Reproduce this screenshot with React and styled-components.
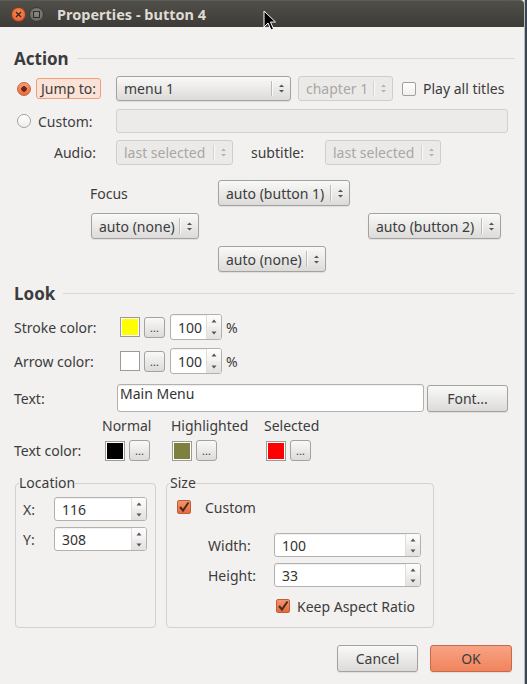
import React from 'react';
import styled, { createGlobalStyle } from 'styled-components';

const Global = createGlobalStyle`
  html, body { margin: 0; padding: 0; background: #3a4654; }
  body {
    font-family: "Noto Sans", "DejaVu Sans", sans-serif;
    font-size: 14px;
    color: #3c3c3c;
  }
  * { box-sizing: border-box; }
`;

const Window = styled.div`
  position: relative;
  width: 525px;
  height: 684px;
  background: #f2f1f0;
  border-right: 1px solid #bdbbb8;
  display: flex;
  flex-direction: column;
  overflow: hidden;
`;

const TitleBar = styled.div`
  flex: none;
  height: 27px;
  display: flex;
  align-items: center;
  padding-left: 11px;
  background: linear-gradient(#504f4a, #3c3b37);
  border-top-right-radius: 4px;
  border-top: 1px solid #5c5b56;
`;

const WinButton = styled.span`
  width: 15px;
  height: 15px;
  border-radius: 50%;
  margin-right: ${p => p.$mr}px;
  display: flex;
  align-items: center;
  justify-content: center;
  border: 1px solid ${p => (p.$close ? '#8a3a1c' : '#3a3935')};
  background: ${p =>
    p.$close
      ? 'radial-gradient(circle at 50% 40%, #f7905f, #e0531f)'
      : 'radial-gradient(circle at 50% 40%, #8d8b84, #5e5c56)'};
`;

const Title = styled.span`
  font-weight: bold;
  font-size: 14.5px;
  color: #dfdbd2;
  white-space: nowrap;
`;

const Body = styled.div`
  flex: 1;
  display: flex;
  flex-direction: column;
  padding-left: 14px;
`;

const Heading = styled.div`
  height: 20px;
  margin-top: ${p => p.$mt}px;
  display: flex;
  align-items: center;
  gap: 8px;
  font-weight: bold;
  font-size: 17px;
  padding-right: 9px;
  &::after {
    content: '';
    flex: 1;
    height: 1px;
    background: #d9d7d4;
  }
`;

const Row = styled.div`
  display: flex;
  align-items: center;
  height: ${p => p.$h || 25}px;
  margin-top: ${p => p.$mt || 0}px;
  white-space: nowrap;
`;

const LabelCell = styled.div`
  flex: none;
  width: ${p => p.$w}px;
  padding-left: ${p => p.$pl || 0}px;
  display: flex;
  align-items: center;
`;

const Gap = styled.span`
  flex: none;
  width: ${p => p.$w}px;
`;

const Radio = styled.span`
  flex: none;
  width: 14px;
  height: 14px;
  margin-left: 3px;
  margin-right: ${p => p.$mr}px;
  border-radius: 50%;
  border: 1px solid ${p => (p.$on ? '#c4643d' : '#a6a4a0')};
  background: ${p =>
    p.$on
      ? 'radial-gradient(circle, #6a2a12 0 2.5px, transparent 3px), linear-gradient(#f79d77, #ea6a3c)'
      : 'linear-gradient(#ffffff, #efeeed)'};
`;

const FocusLabel = styled.span`
  height: 21px;
  padding: 0 4px;
  display: flex;
  align-items: center;
  background: #fbe2d7;
  border: 1px solid #f29c78;
  border-radius: 3px;
`;

const ComboBox = styled.div`
  flex: none;
  width: ${p => p.$w}px;
  height: ${p => p.$h || 25}px;
  display: flex;
  align-items: center;
  border-radius: 3px;
  border: 1px solid ${p => (p.$disabled ? '#d0cecb' : '#a4a29f')};
  background: ${p => (p.$disabled ? '#ebeae8' : 'linear-gradient(#f9f9f8, #dcdbd9)')};
  color: ${p => (p.$disabled ? '#a9a7a4' : '#3c3c3c')};
  box-shadow: ${p => (p.$disabled ? 'none' : '0 1px 1px rgba(0,0,0,0.08)')};
`;

const ComboText = styled.span`
  flex: 1;
  padding-left: 7px;
  overflow: hidden;
`;

const ComboSep = styled.span`
  width: 1px;
  align-self: stretch;
  margin: 4px 0;
  background: ${p => (p.$disabled ? '#d3d1ce' : '#bdbbb8')};
  box-shadow: 1px 0 0 rgba(255, 255, 255, 0.7);
`;

const ArrowBox = styled.span`
  width: 18px;
  display: flex;
  align-items: center;
  justify-content: center;
`;

const UpDown = ({ color = '#4c4c4c' }) => (
  <svg width="7" height="11" viewBox="0 0 7 11">
    <path d="M1 4 L3.5 1.5 L6 4 Z" fill={color} />
    <path d="M1 7 L3.5 9.5 L6 7 Z" fill={color} />
  </svg>
);

const Combo = ({ w, h, disabled, children }) => (
  <ComboBox $w={w} $h={h} $disabled={disabled}>
    <ComboText>{children}</ComboText>
    <ComboSep $disabled={disabled} />
    <ArrowBox>
      <UpDown color={disabled ? '#b5b3b0' : '#555'} />
    </ArrowBox>
  </ComboBox>
);

const Entry = styled.div`
  flex: none;
  width: ${p => p.$w}px;
  height: ${p => p.$h}px;
  border-radius: 3px;
  border: 1px solid ${p => (p.$disabled ? '#d2d0cd' : '#b3b1ae')};
  background: ${p => (p.$disabled ? '#ecebea' : '#ffffff')};
  box-shadow: ${p => (p.$disabled ? 'none' : 'inset 0 1px 1px rgba(0,0,0,0.07)')};
  padding: 0 2px;
  line-height: 18px;
  color: #333;
`;

const CheckBox = styled.span`
  flex: none;
  width: 14px;
  height: 14px;
  margin-left: ${p => p.$ml || 0}px;
  margin-right: ${p => p.$mr || 0}px;
  border-radius: 2px;
  display: flex;
  align-items: center;
  justify-content: center;
  border: 1px solid ${p => (p.$on ? '#bf5f3a' : '#a3a19e')};
  background: ${p => (p.$on ? 'linear-gradient(#f5946c, #e66a3c)' : 'linear-gradient(#ffffff, #f0efee)')};
`;

const Check = ({ on, ml, mr }) => (
  <CheckBox $on={on} $ml={ml} $mr={mr}>
    {on && (
      <svg width="12" height="12" viewBox="0 0 12 12">
        <path d="M2 6 L5 9.5 L10.5 1.5" fill="none" stroke="#4b2a1e" strokeWidth="2" />
      </svg>
    )}
  </CheckBox>
);

const SpinBox = styled.div`
  flex: none;
  width: ${p => p.$w}px;
  height: ${p => p.$h || 24}px;
  display: flex;
  border: 1px solid #b3b1ae;
  border-radius: 3px;
  background: #fff;
  overflow: hidden;
  box-shadow: inset 0 1px 1px rgba(0,0,0,0.06);
`;

const SpinText = styled.span`
  flex: 1;
  display: flex;
  align-items: center;
  padding-left: 7px;
  color: #333;
`;

const SpinButtons = styled.div`
  width: 15px;
  display: flex;
  flex-direction: column;
  border-left: 1px solid #e0dedc;
`;

const SpinHalf = styled.span`
  flex: 1;
  display: flex;
  align-items: center;
  justify-content: center;
  background: ${p => (p.$down ? 'linear-gradient(#efeeed, #e2e1df)' : 'linear-gradient(#fdfdfd, #f3f2f1)')};
`;

const Tri = ({ down }) => (
  <svg width="6" height="4" viewBox="0 0 6 4">
    <path d={down ? 'M0.5 0.5 L3 3.5 L5.5 0.5 Z' : 'M0.5 3.5 L3 0.5 L5.5 3.5 Z'} fill="#555" />
  </svg>
);

const Spin = ({ w, h, value }) => (
  <SpinBox $w={w} $h={h}>
    <SpinText>{value}</SpinText>
    <SpinButtons>
      <SpinHalf><Tri /></SpinHalf>
      <SpinHalf $down><Tri down /></SpinHalf>
    </SpinButtons>
  </SpinBox>
);

const Swatch = styled.span`
  flex: none;
  width: 20px;
  height: 20px;
  border: 1px solid #9c9a97;
  box-shadow: inset 0 0 0 1px #ffffff;
  background: ${p => p.$c};
`;

const DotsButton = styled.span`
  flex: none;
  width: 21px;
  height: 21px;
  margin-left: 4px;
  border: 1px solid #a4a29f;
  border-radius: 3px;
  background: linear-gradient(#f9f9f8, #dcdbd9);
  display: flex;
  justify-content: center;
  align-items: flex-end;
  padding-bottom: 4px;
  font-size: 11px;
  line-height: 1;
`;

const ColorGroup = styled.div`
  display: flex;
  align-items: center;
  padding-left: ${p => p.$pl || 0}px;
`;

const Percent = styled.span`
  margin-left: 4px;
`;

const PushButton = styled.div`
  flex: none;
  width: ${p => p.$w}px;
  height: 27px;
  margin-left: ${p => p.$ml || 0}px;
  display: flex;
  align-items: center;
  justify-content: center;
  border-radius: 3px;
  border: 1px solid ${p => (p.$primary ? '#c66a47' : '#a4a29f')};
  background: ${p => (p.$primary ? 'linear-gradient(#f8a383, #f0845d)' : 'linear-gradient(#f9f9f8, #dcdbd9)')};
  box-shadow: 0 1px 1px rgba(0,0,0,0.08);
`;

const FocusGrid = styled.div`
  margin-top: 15px;
  margin-left: 76px;
  display: grid;
  grid-template-columns: 128px 150px auto;
  grid-auto-rows: 26px;
  row-gap: 7px;
  align-items: center;
  justify-items: start;
  white-space: nowrap;
`;

const Cell = styled.div`
  grid-column: ${p => p.$c};
  grid-row: ${p => p.$r};
  margin-left: ${p => p.$ml || 0}px;
`;

const ColorGrid = styled.div`
  margin-top: 4px;
  display: grid;
  grid-template-columns: 88px 69px 93px auto;
  grid-template-rows: 18px 21px;
  row-gap: 6px;
  align-items: center;
  white-space: nowrap;
`;

const Frames = styled.div`
  margin-top: 14px;
  margin-left: 1px;
  display: flex;
  gap: 10px;
`;

const Frame = styled.fieldset`
  margin: 0;
  width: ${p => p.$w}px;
  height: 153px;
  padding: 0 3px;
  border: 1px solid #d3d1ce;
  border-radius: 4px;
  min-width: 0;
`;

const Legend = styled.legend`
  padding: 0;
  line-height: 16px;
  font-size: 14px;
`;

const ButtonRow = styled.div`
  margin-top: 17px;
  display: flex;
  justify-content: flex-end;
  padding-right: 12px;
`;

const Cursor = styled.svg`
  position: absolute;
  left: 263px;
  top: 10px;
`;

export default function App() {
  return (
    <>
      <Global />
      <Window>
        <TitleBar>
          <WinButton $close $mr={3}>
            <svg width="7" height="7" viewBox="0 0 7 7">
              <path d="M1 1 L6 6 M6 1 L1 6" stroke="#3b2417" strokeWidth="1.4" />
            </svg>
          </WinButton>
          <WinButton $mr={13}>
            <svg width="7" height="7" viewBox="0 0 7 7">
              <rect x="0.5" y="0.5" width="6" height="6" fill="none" stroke="#2f2e2b" strokeWidth="1" />
            </svg>
          </WinButton>
          <Title>Properties - button 4</Title>
        </TitleBar>

        <Body>
          <Heading $mt={21}>Action</Heading>

          <Row $mt={8} $h={25}>
            <LabelCell $w={102}>
              <Radio $on $mr={5} />
              <FocusLabel>Jump to:</FocusLabel>
            </LabelCell>
            <Combo w={175}>menu 1</Combo>
            <Gap $w={7} />
            <Combo w={95} disabled>chapter 1</Combo>
            <Check ml={9} mr={7} />
            <span>Play all titles</span>
          </Row>

          <Row $mt={8} $h={24}>
            <LabelCell $w={102}>
              <Radio $mr={7} />
              <span>Custom:</span>
            </LabelCell>
            <Entry $w={392} $h={24} $disabled />
          </Row>

          <Row $mt={7} $h={25}>
            <LabelCell $w={102} $pl={40}>Audio:</LabelCell>
            <Combo w={117} disabled>last selected</Combo>
            <LabelCell $w={92} $pl={18}>subtitle:</LabelCell>
            <Combo w={116} disabled>last selected</Combo>
          </Row>

          <FocusGrid>
            <Cell $c={1} $r={1}>Focus</Cell>
            <Cell $c={2} $r={1}><Combo w={132} h={26}>auto (button 1)</Combo></Cell>
            <Cell $c={1} $r={2} $ml={1}><Combo w={108} h={26}>auto (none)</Combo></Cell>
            <Cell $c={3} $r={2}><Combo w={133} h={26}>auto (button 2)</Combo></Cell>
            <Cell $c={2} $r={3}><Combo w={108} h={26}>auto (none)</Combo></Cell>
          </FocusGrid>

          <Heading $mt={11}>Look</Heading>

          <Row $mt={11} $h={26}>
            <LabelCell $w={106}>Stroke color:</LabelCell>
            <Swatch $c="#ffff00" />
            <DotsButton>...</DotsButton>
            <Gap $w={5} />
            <Spin w={52} h={26} value="100" />
            <Percent>%</Percent>
          </Row>

          <Row $mt={8} $h={26}>
            <LabelCell $w={106}>Arrow color:</LabelCell>
            <Swatch $c="#ffffff" />
            <DotsButton>...</DotsButton>
            <Gap $w={5} />
            <Spin w={52} h={26} value="100" />
            <Percent>%</Percent>
          </Row>

          <Row $mt={10} $h={28}>
            <LabelCell $w={103}>Text:</LabelCell>
            <Entry $w={307} $h={28}>Main Menu</Entry>
            <PushButton $w={81} $ml={3}>Font...</PushButton>
          </Row>

          <ColorGrid>
            <span />
            <span>Normal</span>
            <span>Highlighted</span>
            <span>Selected</span>
            <span>Text color:</span>
            <ColorGroup $pl={3}><Swatch $c="#000000" /><DotsButton>...</DotsButton></ColorGroup>
            <ColorGroup $pl={1}><Swatch $c="#7f7f3f" /><DotsButton>...</DotsButton></ColorGroup>
            <ColorGroup $pl={2}><Swatch $c="#ff0000" /><DotsButton>...</DotsButton></ColorGroup>
          </ColorGrid>

          <Frames>
            <Frame $w={141}>
              <Legend>Location</Legend>
              <Row $mt={6} $h={24}>
                <LabelCell $w={35} $pl={4}>X:</LabelCell>
                <Spin w={93} value="116" />
              </Row>
              <Row $mt={6} $h={24}>
                <LabelCell $w={35} $pl={4}>Y:</LabelCell>
                <Spin w={93} value="308" />
              </Row>
            </Frame>
            <Frame $w={268}>
              <Legend>Size</Legend>
              <Row $mt={6} $h={20}>
                <Check on ml={7} mr={14} />
                <span>Custom</span>
              </Row>
              <Row $mt={16} $h={24}>
                <LabelCell $w={104} $pl={38}>Width:</LabelCell>
                <Spin w={147} value="100" />
              </Row>
              <Row $mt={6} $h={24}>
                <LabelCell $w={104} $pl={38}>Height:</LabelCell>
                <Spin w={147} value="33" />
              </Row>
              <Row $mt={9} $h={20}>
                <Check on ml={106} mr={7} />
                <span>Keep Aspect Ratio</span>
              </Row>
            </Frame>
          </Frames>

          <ButtonRow>
            <PushButton $w={81}>Cancel</PushButton>
            <PushButton $w={82} $ml={12} $primary>OK</PushButton>
          </ButtonRow>
        </Body>

        <Cursor width="13" height="21" viewBox="0 0 13 21">
          <path d="M1 1 L1 17 L5 13 L8 20 L10.5 19 L7.5 12 L12.5 12 Z" fill="#000" stroke="#fff" strokeWidth="1" strokeLinejoin="round" />
        </Cursor>
      </Window>
    </>
  );
}
